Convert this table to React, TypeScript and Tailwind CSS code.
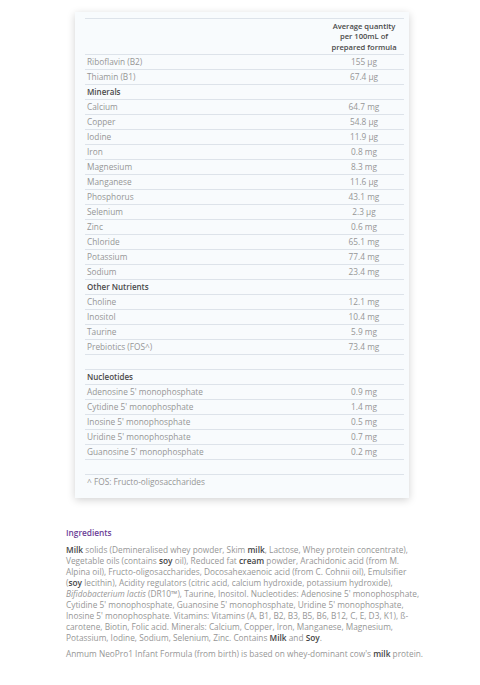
const font = { fontFamily: "'Open Sans', 'Noto Sans', sans-serif" }

type Row =
  | { kind: "item"; name: string; value: string }
  | { kind: "head"; name: string }
  | { kind: "gap" }

const rows: Row[] = [
  { kind: "item", name: "Riboflavin (B2)", value: "155 µg" },
  { kind: "item", name: "Thiamin (B1)", value: "67.4 µg" },
  { kind: "head", name: "Minerals" },
  { kind: "item", name: "Calcium", value: "64.7 mg" },
  { kind: "item", name: "Copper", value: "54.8 µg" },
  { kind: "item", name: "Iodine", value: "11.9 µg" },
  { kind: "item", name: "Iron", value: "0.8 mg" },
  { kind: "item", name: "Magnesium", value: "8.3 mg" },
  { kind: "item", name: "Manganese", value: "11.6 µg" },
  { kind: "item", name: "Phosphorus", value: "43.1 mg" },
  { kind: "item", name: "Selenium", value: "2.3 µg" },
  { kind: "item", name: "Zinc", value: "0.6 mg" },
  { kind: "item", name: "Chloride", value: "65.1 mg" },
  { kind: "item", name: "Potassium", value: "77.4 mg" },
  { kind: "item", name: "Sodium", value: "23.4 mg" },
  { kind: "head", name: "Other Nutrients" },
  { kind: "item", name: "Choline", value: "12.1 mg" },
  { kind: "item", name: "Inositol", value: "10.4 mg" },
  { kind: "item", name: "Taurine", value: "5.9 mg" },
  { kind: "item", name: "Prebiotics (FOS^)", value: "73.4 mg" },
  { kind: "gap" },
  { kind: "head", name: "Nucleotides" },
  { kind: "item", name: "Adenosine 5' monophosphate", value: "0.9 mg" },
  { kind: "item", name: "Cytidine 5' monophosphate", value: "1.4 mg" },
  { kind: "item", name: "Inosine 5' monophosphate", value: "0.5 mg" },
  { kind: "item", name: "Uridine 5' monophosphate", value: "0.7 mg" },
  { kind: "item", name: "Guanosine 5' monophosphate", value: "0.2 mg" },
  { kind: "gap" },
]

function TableRow({ row }: { row: Row }) {
  if (row.kind === "gap") {
    return <div className="h-[15px] border-b border-[#dde3ea]" />
  }
  if (row.kind === "head") {
    return (
      <div className="flex h-[15px] items-center border-b border-[#dde3ea] pl-[2px] text-[8px] font-semibold text-[#4a4a4a]">
        {row.name}
      </div>
    )
  }
  return (
    <div className="flex h-[15px] items-center border-b border-[#dde3ea] text-[8.3px] text-[#969696]">
      <div className="flex-1 pl-[2px]">{row.name}</div>
      <div className="w-[80px] text-center">{row.value}</div>
    </div>
  )
}

const B = ({ children }: { children: React.ReactNode }) => <b className="font-semibold text-[#444]">{children}</b>

export default function App() {
  return (
    <div className="min-h-[685px] bg-white pt-[12px]" style={font}>
      <div className="ml-[75px] w-[334px] bg-[#f8fbfd] pb-[8px] pl-[10px] pr-[5px] pt-[6px] shadow-[0_2px_8px_rgba(0,0,0,0.18)]">
        <div className="flex h-[37px] items-center border-y border-[#dde3ea]">
          <div className="flex-1" />
          <div className="w-[80px] text-center text-[7.6px] font-semibold leading-[10.5px] text-[#4a4a4a]">
            Average quantity
            <br />
            per 100mL of
            <br />
            prepared formula
          </div>
        </div>
        {rows.map((row, i) => (
          <TableRow key={i} row={row} />
        ))}
        <div className="flex h-[15px] items-center pl-[2px] text-[8.3px] text-[#969696]">^ FOS: Fructo-oligosaccharides</div>
      </div>

      <div className="ml-[66px] mt-[29px] w-[368px] text-[8.3px] leading-[11px] text-[#969696]">
        <p className="mb-[6px] font-semibold text-[#6b3d96]">Ingredients</p>
        <p>
          <B>Milk</B> solids (Demineralised whey powder, Skim <B>milk</B>, Lactose, Whey protein concentrate),
          <br />
          Vegetable oils (contains <B>soy</B> oil), Reduced fat <B>cream</B> powder, Arachidonic acid (from M.
          <br />
          Alpina oil), Fructo-oligosaccharides, Docosahexaenoic acid (from C. Cohnii oil), Emulsifier
          <br />
          (<B>soy</B> lecithin), Acidity regulators (citric acid, calcium hydroxide, potassium hydroxide),
          <br />
          <i>Bifidobacterium lactis</i> (DR10™), Taurine, Inositol. Nucleotides: Adenosine 5' monophosphate,
          <br />
          Cytidine 5' monophosphate, Guanosine 5' monophosphate, Uridine 5' monophosphate,
          <br />
          Inosine 5' monophosphate. Vitamins: Vitamins (A, B1, B2, B3, B5, B6, B12, C, E, D3, K1), ß-
          <br />
          carotene, Biotin, Folic acid. Minerals: Calcium, Copper, Iron, Manganese, Magnesium,
          <br />
          Potassium, Iodine, Sodium, Selenium, Zinc. Contains <B>Milk</B> and <B>Soy</B>.
        </p>
        <p className="mt-[5px] whitespace-nowrap">
          Anmum NeoPro1 Infant Formula (from birth) is based on whey-dominant cow's <B>milk</B> protein.
        </p>
      </div>
    </div>
  )
}
